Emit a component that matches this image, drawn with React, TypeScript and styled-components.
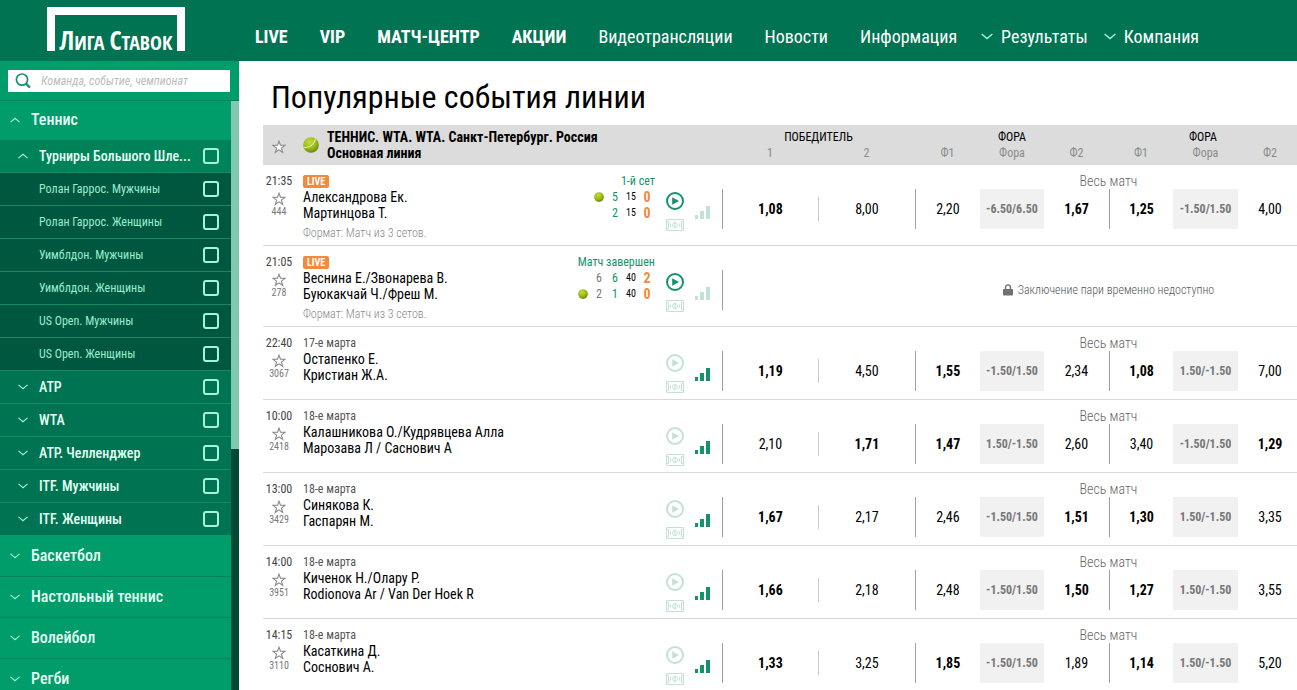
import React from 'react';
import styled, { createGlobalStyle, css } from 'styled-components';

const color = {
  header: '#007452',
  bright: '#009c6a',
  open: '#008259',
  deep: '#005740',
  mint: '#a6f4d8',
  green: '#129468',
  pale: '#c2e2d6',
  orange: '#f08a3c',
  line: '#d8d8d8',
};

const GlobalStyle = createGlobalStyle`
  *, *::before, *::after { box-sizing: border-box; }
  body {
    margin: 0;
    background: #fff;
    color: #000;
    font-family: "Roboto Condensed", Roboto, "Liberation Sans", sans-serif;
    font-size: 14px;
    line-height: 16px;
  }
  button, input { font: inherit; color: inherit; }
  button { padding: 0; border: 0; background: none; cursor: pointer; }
  a { color: inherit; text-decoration: none; }
  ul { margin: 0; padding: 0; list-style: none; }
`;

/* ---------- page frame ---------- */

const Page = styled.div`
  display: flex;
  flex-direction: column;
  height: 100vh;
  overflow: hidden;
`;

const Header = styled.header`
  display: flex;
  flex: none;
  height: 61px;
  background: ${color.header};
  color: #fff;
`;

const LogoArea = styled.div`
  flex: none;
  width: 239px;
  padding: 7px 0 0 47px;
`;

const Logo = styled.a`
  display: flex;
  align-items: flex-end;
  justify-content: center;
  width: 138px;
  height: 44px;
  border: 8px solid #fff;
  border-bottom: 0;
`;

const LogoText = styled.span`
  font-family: "Open Sans Condensed", "Roboto Condensed", sans-serif;
  font-weight: 700;
  font-size: 20px;
  line-height: 16px;
  text-transform: uppercase;
  white-space: nowrap;
`;

const LogoCap = styled.span`
  font-size: 26px;
`;

const Nav = styled.nav`
  display: flex;
  align-items: center;
  gap: 32px;
  padding: 12px 0 0 16px;
  font-size: 18px;
  line-height: 24px;
  white-space: nowrap;
`;

const NavLink = styled.a<{ $strong?: boolean }>`
  font-weight: ${(p) => (p.$strong ? 700 : 400)};
`;

const NavMenus = styled.div`
  display: flex;
  gap: 16px;
  margin-left: -8px;
`;

const NavMenu = styled.button`
  display: flex;
  align-items: center;
  gap: 8px;
  line-height: 24px;
`;

const Body = styled.div`
  display: flex;
  flex: 1;
  min-height: 0;
`;

/* ---------- sidebar ---------- */

const Sidebar = styled.aside`
  display: flex;
  flex-direction: column;
  flex: none;
  width: 239px;
  background: ${color.bright};
  color: #e6fff6;
`;

const SearchBar = styled.form`
  flex: none;
  height: 40px;
  padding: 9px 9px 0 8px;
  border-bottom: 1px solid #00845a;
`;

const SearchBox = styled.label`
  display: flex;
  align-items: center;
  gap: 10px;
  height: 22px;
  padding: 0 7px;
  background: #fff;
`;

const SearchInput = styled.input`
  flex: 1;
  min-width: 0;
  padding: 0;
  border: 0;
  outline: 0;
  background: none;
  color: #333;
  font-size: 12px;
  font-style: italic;

  &::placeholder { color: #bdbdbd; opacity: 1; }
`;

const SidebarScroll = styled.div`
  display: flex;
  flex: 1;
  min-height: 0;
`;

const SportList = styled.ul`
  flex: 1;
  min-width: 0;
  overflow: hidden;
`;

const ScrollTrack = styled.div`
  flex: none;
  width: 8px;
  background: #004a35;
`;

const ScrollThumb = styled.div`
  height: 59%;
  background: #80c9b0;
`;

const Sport = styled.button<{ $open?: boolean }>`
  display: flex;
  align-items: center;
  gap: 11px;
  width: 100%;
  height: ${(p) => (p.$open ? 39 : 41)}px;
  padding: 0 0 ${(p) => (p.$open ? 2 : 0)}px 10px;
  border-bottom: ${(p) => (p.$open ? '0' : '1px solid #00845a')};
  font-size: 16px;
  font-weight: 500;
  text-align: left;
`;

const League = styled.li<{ $level: 'group' | 'open' | 'leaf' }>`
  display: flex;
  align-items: center;
  height: 33px;
  padding: 0 12px 0 18px;
  border-bottom: 1px solid #16895f;
  background: ${(p) =>
    ({ group: color.header, open: color.open, leaf: color.deep })[p.$level]};
  font-weight: 500;

  ${(p) =>
    p.$level === 'leaf' &&
    css`
      padding-left: 39px;
      color: #9ceccd;
      font-size: 12px;
      font-weight: 400;
    `}

  &:last-child { border-bottom-color: ${color.bright}; }
`;

const LeagueToggle = styled.button`
  display: flex;
  flex: none;
  width: 21px;
`;

const LeagueName = styled.label`
  flex: 1;
  white-space: nowrap;
`;

const Check = styled.input`
  appearance: none;
  flex: none;
  width: 16px;
  height: 16px;
  margin: 0;
  border: 2px solid ${color.mint};
  border-radius: 3px;
  &:checked { background: ${color.mint}; }
`;

/* ---------- events ---------- */

const Main = styled.main`
  flex: 1;
  min-width: 0;
  padding-left: 24px;
  overflow: hidden;
`;

const Title = styled.h1`
  margin: 16px 0 8px 8px;
  font-size: 32px;
  line-height: 40px;
  font-weight: 400;
`;

const Table = styled.table`
  width: 100%;
  border-spacing: 0;
  table-layout: fixed;

  td, th { padding: 0; vertical-align: top; }
  th { font-weight: 400; background: #dcdcdc; }
`;

const Col = styled.col<{ $w?: number }>`
  width: ${(p) => (p.$w ? `${p.$w}px` : 'auto')};
`;

const HeadStar = styled.th`
  && { vertical-align: middle; }
`;

const HeadTitle = styled.div`
  display: flex;
  align-items: center;
  gap: 8px;
  height: 40px;
  padding-left: 8px;
  font-weight: 700;
  text-align: left;
`;

const HeadMarket = styled.th`
  height: 20px;
  && { padding-top: 4px; }
  font-size: 12px;
`;

const HeadSub = styled.th<{ $last?: boolean }>`
  height: 20px;
  && { padding-left: ${(p) => (p.$last ? 5 : 0)}px; }
  color: #8a8a8a;
  font-size: 12px;
`;

const InfoRow = styled.tr`
  height: 24px;
`;

const OddsRow = styled.tr<{ $tall?: boolean }>`
  height: ${(p) => (p.$tall ? 57 : 49)}px;
`;

const EventCell = styled.td`
  border-bottom: 1px solid ${color.line};
`;

const TimeBox = styled.div`
  display: flex;
  flex-direction: column;
  align-items: center;
  padding-top: 8px;
  color: #444;
  font-size: 12px;
`;

const StarButton = styled.button`
  display: flex;
  margin: 3px auto 0;
`;

const EventCode = styled.span`
  color: #777;
  font-size: 10px;
  line-height: 12px;
`;

const EventInfo = styled.div`
  padding: 8px 0 0 8px;
  white-space: nowrap;
`;

const EventDate = styled.div`
  height: 16px;
  color: #555;
  font-size: 12px;
`;

const LiveBadge = styled.span`
  display: inline-block;
  margin-top: 2px;
  padding: 0 4px;
  border-radius: 2px;
  background: ${color.orange};
  color: #fff;
  font-size: 10px;
  line-height: 13px;
  font-weight: 700;
`;

const Players = styled.a`
  display: block;
`;

const Format = styled.div`
  margin-top: 4px;
  color: #888;
  font-size: 12px;
  font-weight: 300;
`;

const Score = styled.div`
  display: flex;
  flex-direction: column;
  align-items: flex-end;
  padding-top: 8px;
  white-space: nowrap;
`;

const ScoreTitle = styled.span`
  color: ${color.green};
  font-size: 12px;
`;

const ScoreLine = styled.div`
  display: flex;
`;

const ScoreCell = styled.span<{ $kind: 'past' | 'set' | 'game' | 'total' | 'ball' }>`
  display: flex;
  align-items: center;
  justify-content: center;
  width: 16px;
  height: 16px;
  font-size: 12px;
  ${(p) =>
    ({
      past: css`color: #777;`,
      set: css`color: ${color.green};`,
      game: css`font-size: 10px;`,
      total: css`color: ${color.orange}; font-size: 14px; font-weight: 700;`,
      ball: css``,
    })[p.$kind]}
`;

const Tools = styled.div`
  display: flex;
  align-items: center;
  gap: 10px;
  padding: 27px 0 0 11px;
`;

const ToolStack = styled.div`
  display: flex;
  flex-direction: column;
  gap: 9px;
`;

const ToolButton = styled.button<{ $active?: boolean }>`
  display: flex;
  color: ${(p) => (p.$active ? color.green : color.pale)};
`;

const Caption = styled.td`
  color: #666;
  font-weight: 300;
  text-align: center;
  && { padding: 8px 0 0 5px; }
`;

const OddsCell = styled.td`
  border-bottom: 1px solid ${color.line};
`;

const OddsBox = styled.div<{ $last?: boolean }>`
  display: flex;
  align-items: center;
  height: 40px;
  padding-left: ${(p) => (p.$last ? 5 : 0)}px;
`;

const Divider = styled.span<{ $short?: boolean }>`
  flex: none;
  width: 1px;
  height: ${(p) => (p.$short ? 24 : 40)}px;
  background: ${(p) => (p.$short ? '#c8c8c8' : '#a0a0a0')};
`;

const Odd = styled.button<{ $best?: boolean }>`
  flex: 1;
  height: 40px;
  font-weight: ${(p) => (p.$best ? 700 : 400)};
`;

const Handicap = styled.button`
  flex: 1;
  height: 40px;
  background: #f1f1f1;
  color: #777;
  font-size: 12px;
  font-weight: 700;
`;

const Locked = styled.div`
  display: flex;
  align-items: center;
  justify-content: center;
  gap: 5px;
  height: 40px;
  padding-left: 5px;
  color: #555;
  font-size: 12px;
  font-weight: 300;
`;

/* ---------- icons ---------- */

const Chevron = ({ up, size = 10 }: { up?: boolean; size?: number }) => (
  <svg width={size} height={size / 2 + 1} viewBox="0 0 12 7" fill="none" stroke={color.mint} strokeWidth="1.4" aria-hidden>
    <path d={up ? 'M.6 6 6 1.4 11.4 6' : 'M.6 1 6 5.6 11.4 1'} />
  </svg>
);

const SearchIcon = () => (
  <svg width="16" height="16" viewBox="0 0 16 16" fill="none" stroke={color.green} aria-hidden>
    <circle cx="7" cy="6.6" r="5.6" strokeWidth="1.7" />
    <path d="m11 10.6 4 4" strokeWidth="2.2" />
  </svg>
);

const Star = ({ fill = 'none' }: { fill?: string }) => (
  <svg width="14" height="14" viewBox="0 0 14 14" fill={fill} stroke="#8c8c8c" strokeWidth="1.1" aria-hidden>
    <path d="M7 1.2 8.5 5.3l4.4.1-3.5 2.7 1.3 4.2L7 9.8l-3.7 2.5 1.3-4.2L1.1 5.4l4.4-.1z" />
  </svg>
);

const Ball = ({ size }: { size: number }) => (
  <svg width={size} height={size} viewBox="0 0 16 16" aria-hidden>
    <defs>
      <radialGradient id="ball" cx=".4" cy=".3" r=".75">
        <stop offset="0" stopColor="#c8dc3c" />
        <stop offset=".6" stopColor="#96b814" />
        <stop offset="1" stopColor="#5f7c0c" />
      </radialGradient>
    </defs>
    <circle cx="8" cy="8" r="7.8" fill="url(#ball)" />
    {size > 12 && <path d="M1.2 10.4C5.6 10.8 10.8 8.6 12.4 2.2" fill="none" stroke="#eef4c0" strokeWidth="1.1" />}
  </svg>
);

const Play = () => (
  <svg width="18" height="18" viewBox="0 0 18 18" aria-hidden>
    <circle cx="9" cy="9" r="8" fill="none" stroke="currentColor" strokeWidth="2" />
    <path d="M6.2 5.2 13 9l-6.8 3.8z" fill="currentColor" />
  </svg>
);

const Field = () => (
  <svg width="18" height="12" viewBox="0 0 18 12" fill="none" stroke={color.pale} aria-hidden>
    <path d="M.5.5h17v11H.5zM9 2.5v7M.5 2.5h2v7h-2M17.5 2.5h-2v7h2" />
    <path d="M4 4.2q1.4 1.8 0 3.6M14 4.2q-1.4 1.8 0 3.6" />
    <circle cx="9" cy="6" r="2.4" />
  </svg>
);

const Bars = () => (
  <svg width="16" height="14" viewBox="0 0 16 14" fill="currentColor" aria-hidden>
    <path d="M1 10h3v4H1zM6 6h4v8H6zM12 1h4v13h-4z" />
  </svg>
);

const Lock = () => (
  <svg width="10" height="12" viewBox="0 0 10 12" aria-hidden>
    <path d="M2.5 6V3.4a2.5 2.5 0 0 1 5 0V6" fill="none" stroke="#707070" strokeWidth="1.4" />
    <rect y="5" width="10" height="6.5" rx="1" fill="#707070" />
  </svg>
);

/* ---------- data ---------- */

const topLinks = ['LIVE', 'VIP', 'МАТЧ-ЦЕНТР', 'АКЦИИ'];
const plainLinks = ['Видеотрансляции', 'Новости', 'Информация'];

type Level = 'group' | 'open' | 'leaf';
const leagues: [string, Level][] = [
  ['Турниры Большого Шле...', 'open'],
  ['Ролан Гаррос. Мужчины', 'leaf'],
  ['Ролан Гаррос. Женщины', 'leaf'],
  ['Уимблдон. Мужчины', 'leaf'],
  ['Уимблдон. Женщины', 'leaf'],
  ['US Open. Мужчины', 'leaf'],
  ['US Open. Женщины', 'leaf'],
  ['ATP', 'group'],
  ['WTA', 'group'],
  ['ATP. Челленджер', 'group'],
  ['ITF. Мужчины', 'group'],
  ['ITF. Женщины', 'group'],
];
const sports = ['Баскетбол', 'Настольный теннис', 'Волейбол', 'Регби'];

interface LiveScore {
  title: string;
  serving: 0 | 1;
  /** earlier sets, current set, points, sets won */
  lines: { past: string[]; set: string; game: string; total: string }[];
}

interface Match {
  time: string;
  code: string;
  date?: string;
  players: [string, string];
  score?: LiveScore;
  odds?: string[];
  best?: number[];
}

const matches: Match[] = [
  {
    time: '21:35', code: '444', players: ['Александрова Ек.', 'Мартинцова Т.'],
    score: {
      title: '1-й сет', serving: 0,
      lines: [
        { past: [], set: '5', game: '15', total: '0' },
        { past: [], set: '2', game: '15', total: '0' },
      ],
    },
    odds: ['1,08', '8,00', '2,20', '-6.50/6.50', '1,67', '1,25', '-1.50/1.50', '4,00'], best: [0, 4, 5],
  },
  {
    time: '21:05', code: '278', players: ['Веснина Е./Звонарева В.', 'Буюкакчай Ч./Фреш М.'],
    score: {
      title: 'Матч завершен', serving: 1,
      lines: [
        { past: ['6'], set: '6', game: '40', total: '2' },
        { past: ['2'], set: '1', game: '40', total: '0' },
      ],
    },
  },
  {
    time: '22:40', code: '3067', date: '17-е марта', players: ['Остапенко Е.', 'Кристиан Ж.А.'],
    odds: ['1,19', '4,50', '1,55', '-1.50/1.50', '2,34', '1,08', '1.50/-1.50', '7,00'], best: [0, 2, 5],
  },
  {
    time: '10:00', code: '2418', date: '18-е марта', players: ['Калашникова О./Кудрявцева Алла', 'Марозава Л / Саснович А'],
    odds: ['2,10', '1,71', '1,47', '1.50/-1.50', '2,60', '3,40', '-1.50/1.50', '1,29'], best: [1, 2, 7],
  },
  {
    time: '13:00', code: '3429', date: '18-е марта', players: ['Синякова К.', 'Гаспарян М.'],
    odds: ['1,67', '2,17', '2,46', '-1.50/1.50', '1,51', '1,30', '1.50/-1.50', '3,35'], best: [0, 4, 5],
  },
  {
    time: '14:00', code: '3951', date: '18-е марта', players: ['Киченок Н./Олару Р.', 'Rodionova Ar / Van Der Hoek R'],
    odds: ['1,66', '2,18', '2,48', '-1.50/1.50', '1,50', '1,27', '1.50/-1.50', '3,55'], best: [0, 4, 5],
  },
  {
    time: '14:15', code: '3110', date: '18-е марта', players: ['Касаткина Д.', 'Соснович А.'],
    odds: ['1,33', '3,25', '1,85', '-1.50/1.50', '1,89', '1,14', '1.50/-1.50', '5,20'], best: [0, 2, 5],
  },
];

const columns = [32, undefined, 96, 67, 96, 97, 65, 64, 65, 64, 65, 59];
const subHeads = ['1', '2', 'Ф1', 'Фора', 'Ф2', 'Ф1', 'Фора', 'Ф2'];

/* ---------- parts ---------- */

const ScoreBoard = ({ score }: { score: LiveScore }) => (
  <Score>
    <ScoreTitle>{score.title}</ScoreTitle>
    {score.lines.map((line, i) => (
      <ScoreLine key={i}>
        {score.serving === i && <ScoreCell $kind="ball"><Ball size={10} /></ScoreCell>}
        {line.past.map((s, k) => <ScoreCell key={k} $kind="past">{s}</ScoreCell>)}
        <ScoreCell $kind="set">{line.set}</ScoreCell>
        <ScoreCell $kind="game">{line.game}</ScoreCell>
        <ScoreCell $kind="total">{line.total}</ScoreCell>
      </ScoreLine>
    ))}
  </Score>
);

const MatchRows = ({ match }: { match: Match }) => {
  const live = Boolean(match.score);
  return (
    <tbody>
      <InfoRow>
        <EventCell rowSpan={2}>
          <TimeBox>
            <span>{match.time}</span>
            <StarButton type="button" aria-label="В избранное"><Star /></StarButton>
            <EventCode>{match.code}</EventCode>
          </TimeBox>
        </EventCell>
        <EventCell rowSpan={2}>
          <EventInfo>
            <EventDate>{live ? <LiveBadge>LIVE</LiveBadge> : match.date}</EventDate>
            <Players href="#">{match.players[0]}<br />{match.players[1]}</Players>
            {live && <Format>Формат: Матч из 3 сетов.</Format>}
          </EventInfo>
        </EventCell>
        <EventCell rowSpan={2}>{match.score && <ScoreBoard score={match.score} />}</EventCell>
        <EventCell rowSpan={2}>
          <Tools>
            <ToolStack>
              <ToolButton type="button" $active={live} aria-label="Трансляция"><Play /></ToolButton>
              <ToolButton type="button" aria-label="Поле"><Field /></ToolButton>
            </ToolStack>
            <ToolButton type="button" $active={!live} aria-label="Статистика"><Bars /></ToolButton>
          </Tools>
        </EventCell>
        <td colSpan={2} />
        <Caption colSpan={6}>{match.odds && 'Весь матч'}</Caption>
      </InfoRow>
      <OddsRow $tall={live}>
        {match.odds ? (
          match.odds.map((value, i) => (
            <OddsCell key={i}>
              <OddsBox $last={i === 7}>
                {[0, 1, 2, 5].includes(i) && <Divider $short={i === 1} />}
                {i === 3 || i === 6 ? (
                  <Handicap type="button">{value}</Handicap>
                ) : (
                  <Odd type="button" $best={match.best?.includes(i)}>{value}</Odd>
                )}
              </OddsBox>
            </OddsCell>
          ))
        ) : (
          <>
            <OddsCell colSpan={2}><OddsBox><Divider /></OddsBox></OddsCell>
            <OddsCell colSpan={6}><Locked><Lock />Заключение пари временно недоступно</Locked></OddsCell>
          </>
        )}
      </OddsRow>
    </tbody>
  );
};

export default function App() {
  return (
    <Page>
      <GlobalStyle />
      <Header>
        <LogoArea>
          <Logo href="#">
            <LogoText><LogoCap>Л</LogoCap>ига <LogoCap>С</LogoCap>тавок</LogoText>
          </Logo>
        </LogoArea>
        <Nav>
          {topLinks.map((t) => <NavLink key={t} href="#" $strong>{t}</NavLink>)}
          {plainLinks.map((t) => <NavLink key={t} href="#">{t}</NavLink>)}
          <NavMenus>
            <NavMenu type="button"><Chevron size={12} />Результаты</NavMenu>
            <NavMenu type="button"><Chevron size={12} />Компания</NavMenu>
          </NavMenus>
        </Nav>
      </Header>
      <Body>
        <Sidebar>
          <SearchBar>
            <SearchBox>
              <SearchIcon />
              <SearchInput type="text" aria-label="Поиск" placeholder="Команда, событие, чемпионат" />
            </SearchBox>
          </SearchBar>
          <SidebarScroll>
            <SportList>
              <li>
                <Sport type="button" $open><Chevron up />Теннис</Sport>
                <ul>
                  {leagues.map(([name, level], i) => (
                    <League key={name} $level={level}>
                      {level !== 'leaf' && (
                        <LeagueToggle type="button" aria-label={name}><Chevron up={level === 'open'} /></LeagueToggle>
                      )}
                      <LeagueName htmlFor={`league-${i}`}>{name}</LeagueName>
                      <Check type="checkbox" id={`league-${i}`} />
                    </League>
                  ))}
                </ul>
              </li>
              {sports.map((s) => (
                <li key={s}><Sport type="button"><Chevron />{s}</Sport></li>
              ))}
            </SportList>
            <ScrollTrack><ScrollThumb /></ScrollTrack>
          </SidebarScroll>
        </Sidebar>
        <Main>
          <Title>Популярные события линии</Title>
          <Table>
            <colgroup>{columns.map((w, i) => <Col key={i} $w={w} />)}</colgroup>
            <thead>
              <tr>
                <HeadStar rowSpan={2}>
                  <StarButton type="button" aria-label="В избранное"><Star fill="#fff" /></StarButton>
                </HeadStar>
                <th rowSpan={2} colSpan={3}>
                  <HeadTitle>
                    <Ball size={16} />
                    <span>ТЕННИС. WTA. WTA. Санкт-Петербург. Россия<br />Основная линия</span>
                  </HeadTitle>
                </th>
                <HeadMarket colSpan={2}>ПОБЕДИТЕЛЬ</HeadMarket>
                <HeadMarket colSpan={3}>ФОРА</HeadMarket>
                <HeadMarket colSpan={3}>ФОРА</HeadMarket>
              </tr>
              <tr>
                {subHeads.map((s, i) => <HeadSub key={i} $last={i === 7}>{s}</HeadSub>)}
              </tr>
            </thead>
            {matches.map((m) => <MatchRows key={m.code} match={m} />)}
          </Table>
        </Main>
      </Body>
    </Page>
  );
}
